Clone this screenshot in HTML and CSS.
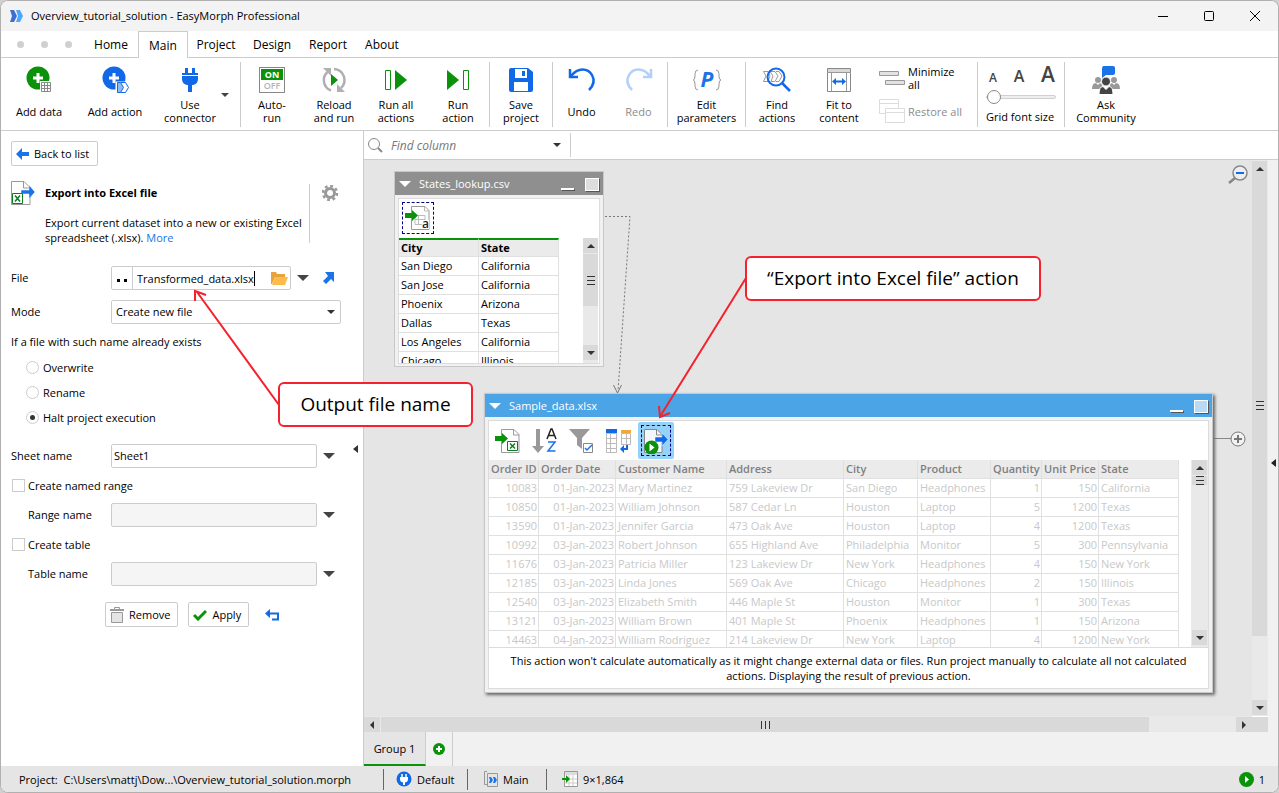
FILE: index.html
```html
<!DOCTYPE html>
<html lang="en">
<head>
<meta charset="utf-8">
<title>Overview_tutorial_solution - EasyMorph Professional</title>
<link rel="stylesheet" href="styles.css">
</head>
<body>
<div class="window">
  <header class="titlebar">
    <svg class="logo" width="14" height="12" viewBox="0 0 14 12"><path d="M0 0h4l3 6-3 6H0l2-6z" fill="#3f6fd0"/><path d="M6 0h4l3 6-3 6H6l2-6z" fill="#4aa8ff"/></svg>
    <h1 class="title">Overview_tutorial_solution - EasyMorph Professional</h1>
    <div class="winctl">
      <button aria-label="Minimize"><svg width="12" height="12"><path d="M1 6.500h10" stroke="#000"/></svg></button>
      <button aria-label="Maximize"><svg width="12" height="12"><rect x="1.500" y="1.500" width="9" height="9" rx="1" fill="none" stroke="#000"/></svg></button>
      <button aria-label="Close"><svg width="12" height="12"><path d="M1 1l10 10M11 1L1 11" stroke="#000"/></svg></button>
    </div>
  </header>
  <nav class="tabs">
    <span class="dots"><i></i><i></i><i></i></span>
    <button class="tab t-home">Home</button><button class="tab t-main on">Main</button><button class="tab t-project">Project</button><button class="tab t-design">Design</button><button class="tab t-report">Report</button><button class="tab t-about">About</button>
    <span class="tabfill"></span>
  </nav>
  <div class="ribbon">
    <div class="group g-add">
      <button class="rb w76"><svg class="ic" width="28" height="28" viewBox="0 0 28 28"><circle cx="13" cy="12" r="11.500" fill="#0a930a"/><path d="M13 7v10M8 12h10" stroke="#fff" stroke-width="3"/><rect x="15" y="15" width="12" height="12" fill="#fff"/><path d="M16.500 16.500h9v9h-9zM19.500 16v10M22.500 16v10M16 19.500h10M16 22.500h10" fill="none" stroke="#888"/></svg><span class="lb">Add data</span></button>
      <button class="rb w76"><svg class="ic" width="28" height="28" viewBox="0 0 28 28"><circle cx="13" cy="12" r="11.500" fill="#1269e8"/><path d="M13 7v10M8 12h10" stroke="#fff" stroke-width="3"/><path d="M15.500 16.500h8l4 5-4 5.500h-8z" fill="#fff" stroke="#fff" stroke-width="2"/><path d="M16.500 16.500h3l3 5-3 5h-3z" fill="#8cbcf0" stroke="#1269e8"/><path d="M19.500 16.500h5l3 5-3 5h-5" fill="none" stroke="#1269e8"/></svg><span class="lb">Add action</span></button>
      <button class="rb w74"><svg class="ic" width="26" height="28" viewBox="0 0 26 28"><path d="M8 2h3v6H8zM15 2h3v6h-3zM5 7h16v2H5zM5 10h16v3q0 5-5 6h-1v7h-4v-7h-1q-5-1-5-6z" fill="#1269e8"/></svg><span class="lb">Use<br>connector</span></button>
      <button class="dd" aria-label="Connector list"></button>
    </div>
    <div class="group">
      <button class="rb w62"><svg class="ic" width="26" height="28" viewBox="0 0 26 28"><rect x=".5" y="1.500" width="25" height="25" fill="#fff" stroke="#888"/><path d="M2 3h22v11H2z" fill="#0a930a"/><g font-family="Open Sans" font-weight="700" text-anchor="middle"><text x="13" y="12" font-size="9" fill="#fff">ON</text><text x="13" y="23" font-size="9" fill="#b4b4b4" font-weight="600">OFF</text></g></svg><span class="lb">Auto-<br>run</span></button>
      <button class="rb w62"><svg class="ic" width="26" height="28" viewBox="0 0 26 28"><path d="M10 24.500A11 11 0 0 1 6.500 6M13 3A11 11 0 0 1 20 22" fill="none" stroke="#b0b0b0" stroke-width="2.500"/><path d="M2 2h8v8zM24 26h-8v-8z" fill="#b0b0b0"/><path d="M10 8v12l7-6z" fill="#0a930a"/></svg><span class="lb">Reload<br>and run</span></button>
      <button class="rb w62"><svg class="ic" width="26" height="28" viewBox="0 0 26 28"><path d="M2.500 4.500h5v19h-5z" fill="none" stroke="#0a930a"/><path d="M12 4v20l12-10z" fill="#0a930a"/></svg><span class="lb">Run all<br>actions</span></button>
      <button class="rb w62"><svg class="ic" width="26" height="28" viewBox="0 0 26 28"><path d="M18.500 4.500h5v19h-5z" fill="none" stroke="#0a930a"/><path d="M2 4v20l12-10z" fill="#0a930a"/></svg><span class="lb">Run<br>action</span></button>
    </div>
    <div class="group">
      <button class="rb w62"><svg class="ic" width="26" height="28" viewBox="0 0 26 28"><path d="M3 2h17l5 4v18q0 2-2 2H3q-2 0-2-2V4q0-2 2-2z" fill="#1269e8"/><path d="M7 3h12v9H7zM6 16h14v9H6z" fill="#fff"/><path d="M14 5h3v5h-3z" fill="#1269e8"/></svg><span class="lb">Save<br>project</span></button>
    </div>
    <div class="group">
      <button class="rb w57"><svg class="ic" width="28" height="28" viewBox="0 0 28 28"><path d="M3 10C10 1 20 2 24 9c4 7 0 12-3 15M2 3v8h8" fill="none" stroke="#1269e8" stroke-width="2.500"/></svg><span class="lb">Undo</span></button>
      <button class="rb w57 off" disabled><svg class="ic" width="28" height="28" viewBox="0 0 28 28"><path d="M25 10C18 1 8 2 4 9c-4 7 0 12 3 15M26 3v8h-8" fill="none" stroke="#b4d0f8" stroke-width="2.500"/></svg><span class="lb">Redo</span></button>
    </div>
    <div class="group">
      <button class="rb w77"><svg class="ic" width="30" height="28" viewBox="0 0 30 28"><path d="M6 4Q3 4 3 8v2q0 4-2 4 2 0 2 4v2q0 4 3 4M24 4q3 0 3 4v2q0 4 2 4-2 0-2 4v2q0 4-3 4" fill="none" stroke="#999"/><text x="15" y="21" text-anchor="middle" font-family="Open Sans" font-size="21" font-weight="700" font-style="italic" fill="#1a73e8">P</text></svg><span class="lb">Edit<br>parameters</span></button>
    </div>
    <div class="group g-find">
      <button class="rb w62"><svg class="ic" width="28" height="28" viewBox="0 0 28 28"><path d="M.5 5.500H5l2 4.500-2 5.500H.5L3 10zM7 5.500h5l3 4.500-3 5.500H8L10 10zM13 5.500h3l3 4.500-3 5.500h-3" fill="none" stroke="#999"/><circle cx="13" cy="11" r="8.500" fill="none" stroke="#1269e8" stroke-width="2"/><path d="M19 17l8 8" stroke="#1269e8" stroke-width="2.500"/></svg><span class="lb">Find<br>actions</span></button>
      <button class="rb w62"><svg class="ic" width="26" height="28" viewBox="0 0 26 28"><path d="M1.500 2.500h23v23h-23z" fill="#fff" stroke="#888"/><path d="M2 3h22v3H2z" fill="#d8d8d8"/><path d="M1 6.500h24M5.500 7v18M20.500 7v18" stroke="#999"/><path d="M8 15.500h10" stroke="#1269e8" stroke-width="2"/><path d="M10 12l-4 3.500 4 3.500zM16 12l4 3.500-4 3.500z" fill="#1269e8"/></svg><span class="lb">Fit to<br>content</span></button>
      <div class="stackbtns">
        <button class="hb"><svg width="26" height="16"><path d="M.5 1.500h19v4H.5zM6.500 10.500h19v4h-19z" fill="#e2e2e2" stroke="#999"/></svg><span>Minimize<br>all</span></button>
        <button class="hb off" disabled><svg width="26" height="26"><g fill="#fff" stroke="#dcdcdc"><path d="M.5 1.500h19v14H.5zM.5 5.500h19"/><path d="M6.500 10.500h19v14h-19zM6.500 14.500h19"/></g></svg><span>Restore all</span></button>
      </div>
    </div>
    <div class="group g-font">
      <div class="aaa"><b class="a1">A</b><b class="a2">A</b><b class="a3">A</b></div>
      <input type="range" id="gfs" class="slider" min="0" max="10" value="0">
      <label for="gfs" class="gfl">Grid font size</label>
    </div>
    <div class="group last">
      <button class="rb w82"><svg class="ic" width="28" height="28" viewBox="0 0 28 28"><path d="M11 0h10q2 0 2 2v5q0 2-2 2h-7l-4 3V2z" fill="#1a73e8"/><g fill="#999"><circle cx="6" cy="14" r="3"/><circle cx="22" cy="14" r="3"/><path d="M0 23q0-6 4-6l2 2 2-2q2 0 3 6zM28 23q0-6-4-6l-2 2-2-2q-2 0-3 6z"/></g><g fill="#444" stroke="#fff"><circle cx="14" cy="15.500" r="4.500"/><path d="M7 28.500q0-8 4-8l3 3 3-3q4 0 4 8z"/></g></svg><span class="lb">Ask<br>Community</span></button>
    </div>
  </div>

  <div class="main">
    <aside class="side">
      <div class="form">
        <button class="btn back"><svg width="13" height="12"><path d="M0 6l6-6v4h7v4H6v4z" fill="#1a73e8"/></svg>Back to list</button>
        <section class="about">
          <svg width="25" height="25" viewBox="0 0 25 25"><path d="M.5.500H13l6 6v17H.5z" fill="#fff" stroke="#999"/><path d="M12.500 1v6H18" fill="none" stroke="#999"/><path d="M10 9h8V4l6 7-6 7v-5h-8z" fill="#1a73e8" stroke="#fff" stroke-width=".5"/><path d="M1.500 12.500h10v10h-10z" fill="#fff" stroke="#0a7d1e"/><path d="M4 14.500l5 6M9 14.500l-5 6" stroke="#0a7d1e" stroke-width="1.500"/></svg>
          <div class="abouttext"><h2>Export into Excel file</h2><p>Export current dataset into a new or existing Excel spreadsheet (.xlsx). <a href="#">More</a></p></div>
          <button class="plain gear" aria-label="Settings"><svg width="16" height="16" viewBox="0 0 16 16"><circle cx="8" cy="8" r="4.500" fill="none" stroke="#999" stroke-width="3"/><circle cx="8" cy="8" r="7" fill="none" stroke="#999" stroke-width="2.500" stroke-dasharray="2.800 2.700" /></svg></button>
        </section>
        <div class="row r1"><label for="file">File</label>
          <div class="filebox"><svg class="dd2" width="21" height="22"><path d="M5 12h3v3H5zM12 12h3v3h-3z"/></svg><input id="file" value="Transformed_data.xlsx"><i class="caret"></i>
            <button class="plain" aria-label="Browse"><svg width="17" height="14" viewBox="0 0 17 14"><path d="M0 13V1h5l1 2h8v3H4L1 13z" fill="#e8a33a"/><path d="M4 6h13l-3 8H1z" fill="#fdbb4a"/></svg></button></div>
          <button class="plain tri" aria-label="File options"></button>
          <button class="plain open" aria-label="Open file"><svg width="12" height="12"><path d="M2 0h9v10L8 7l-5 5-3-3 5-5z" fill="#1a73e8"/></svg></button></div>
        <div class="row r2"><label for="mode">Mode</label><div class="selwrap"><select id="mode"><option>Create new file</option></select></div></div>
        <fieldset><legend>If a file with such name already exists</legend>
          <label class="opt"><input type="radio" name="ex">Overwrite</label>
          <label class="opt"><input type="radio" name="ex">Rename</label>
          <label class="opt"><input type="radio" name="ex" checked>Halt project execution</label></fieldset>
        <div class="row r3"><label for="sheet">Sheet name</label><input class="txt" id="sheet" value="Sheet1"><button class="plain tri" aria-label="Sheet options"></button></div>
        <label class="chk"><input type="checkbox">Create named range</label>
        <div class="row sub"><label for="rng">Range name</label><input class="txt" id="rng" disabled><button class="plain tri" aria-label="Range options"></button></div>
        <label class="chk"><input type="checkbox">Create table</label>
        <div class="row sub"><label for="tbl">Table name</label><input class="txt" id="tbl" disabled><button class="plain tri" aria-label="Table options"></button></div>
        <div class="acts">
          <button class="btn"><svg width="14" height="16" viewBox="0 0 14 16"><path d="M4.500 2V.500h5V2" fill="none" stroke="#999"/><path d="M0 2h14v2H0z" fill="#999"/><path d="M1.500 5.500h11v10h-11z" fill="#e4e4e4" stroke="#999"/></svg>Remove</button>
          <button class="btn apply"><svg width="14" height="12"><path d="M1 6l4 4 8-8" fill="none" stroke="#0a930a" stroke-width="3"/></svg>Apply</button>
          <button class="plain revert" aria-label="Revert"><svg width="15" height="12"><path d="M4 4.500h9v6H7" fill="none" stroke="#1269e8" stroke-width="2"/><path d="M0 4.500L5 0v9z" fill="#1269e8"/></svg></button>
        </div>
      </div>
      <button class="plain fold" aria-label="Collapse panel"><svg width="5" height="8"><path d="M5 0v8L0 4z" fill="#333"/></svg></button>
    </aside>

    <section class="work">
      <div class="find">
        <svg width="15" height="15"><circle cx="6" cy="6" r="5.500" fill="none" stroke="#888"/><path d="M10 10l4 4" stroke="#888" stroke-width="2"/></svg>
        <input placeholder="Find column" aria-label="Find column"><button class="plain mini" aria-label="Columns"></button>
      </div>
      <div class="workrow">
        <div class="desk">
          <div class="canvas">
            <article class="tile t1">
              <header><i class="wtri"></i><span>States_lookup.csv</span><i class="min"></i><i class="max"></i></header>
              <div class="inner">
                <div class="tools"><button class="tool dash" aria-label="Import text file"><svg width="26" height="26" viewBox="0 0 26 26"><path d="M6.500 1.500H20l4 4v19H6.500z" fill="#fff" stroke="#999"/><path d="M19.500 2v4H24M10 10.500h10v9H10zM13.500 10v10M10 14.500h10" fill="none" stroke="#bbb"/><path d="M0 8h7V5l6 5.500L7 16v-3H0z" fill="#0a930a"/><path d="M17 15h7v9h-7z" fill="#fff"/><text x="17" y="23" font-family="Open Sans" font-size="12" font-weight="600" fill="#222">a</text></svg></button></div>
                <div class="gridrow">
                  <table class="grid g1"><colgroup><col class="c80"><col class="c80"></colgroup><thead><tr><th>City</th><th>State</th></tr></thead>
                  <tbody><tr><td>San Diego</td><td>California</td></tr><tr><td>San Jose</td><td>California</td></tr><tr><td>Phoenix</td><td>Arizona</td></tr><tr><td>Dallas</td><td>Texas</td></tr><tr><td>Los Angeles</td><td>California</td></tr><tr><td>Chicago</td><td>Illinois</td></tr></tbody></table>
                  <div class="vs s1"><i class="ar up"></i><i class="th"></i><i class="ar dn"></i></div>
                </div>
              </div>
            </article>
            <article class="tile t2">
              <header><i class="wtri"></i><span>Sample_data.xlsx</span><i class="min"></i><i class="max"></i></header>
              <div class="inner">
                <div class="tools">
                  <button class="tool" aria-label="Import Excel"><svg width="26" height="26" viewBox="0 0 26 26"><path d="M6.500 1.500H19l5 5v18H6.500z" fill="#fff" stroke="#999"/><path d="M18.500 2v5H24" fill="none" stroke="#999"/><path d="M0 8h7V5l6 5.500L7 16v-3H0z" fill="#0a930a"/><path d="M12.500 13.500h10v9h-10z" fill="#fff" stroke="#0a7d1e"/><path d="M15 15.500l5 5M20 15.500l-5 5" stroke="#0a7d1e" stroke-width="1.500"/></svg></button>
                  <button class="tool" aria-label="Sort"><svg width="26" height="26" viewBox="0 0 26 26"><path d="M4 1h4v17h4l-6 7-6-7h4z" fill="#999"/><path d="M15 11l4-10h1l4 10M16.500 7.500h6" fill="none" stroke="#222" stroke-width="1.500"/><path d="M16 14h7l-7 9h7.500" fill="none" stroke="#1a73e8" stroke-width="1.500"/></svg></button>
                  <button class="tool" aria-label="Filter"><svg width="26" height="26" viewBox="0 0 26 26"><path d="M0 1h21l-8 9v11l-5-4v-7z" fill="#999"/><path d="M14.500 15.500h9v9h-9z" fill="#fff" stroke="#888"/><path d="M16 20l2 2 5-5" fill="none" stroke="#1a73e8" stroke-width="1.500"/></svg></button>
                  <button class="tool" aria-label="Match"><svg width="26" height="26" viewBox="0 0 26 26"><path d="M.5 5.500h10v19H.5zM4.500 5v20M.5 10.500h10M.5 15.500h10M.5 20.500h10M15.500 5.500h9v11h-9zM20.500 5v11M15 10.500h10" fill="none" stroke="#bbb"/><path d="M0 1h11v4H0z" fill="#1269e8"/><path d="M15 2h10v3H15z" fill="#f0a83c"/><path d="M14 21l4-4v3h2v-3h2v5h-4v3z" fill="#1269e8"/></svg></button>
                  <button class="tool sel" aria-label="Export into Excel file"><svg width="26" height="26" viewBox="0 0 26 26"><path d="M1.500 1.500H14l5 5v18H1.500z" fill="#f4f8fc" stroke="#888"/><path d="M13.500 2v5H19" fill="none" stroke="#888"/><path d="M12 9h7V5l6 6.500L19 18v-4h-7z" fill="#1269e8" stroke="#fff" stroke-width=".5"/><circle cx="8.500" cy="19.500" r="7" fill="#0a930a"/><path d="M6.500 15.500v8l5-4z" fill="#fff"/></svg></button>
                </div>
                <div class="gridrow">
                  <table class="grid g2"><colgroup><col class="c50"><col class="c77"><col class="c111"><col class="c117"><col class="c74"><col class="c73"><col class="c51"><col class="c57"><col class="c80"></colgroup>
                  <thead><tr><th>Order ID</th><th>Order Date</th><th>Customer Name</th><th>Address</th><th>City</th><th>Product</th><th>Quantity</th><th>Unit Price</th><th>State</th></tr></thead>
                  <tbody>
                  <tr><td>10083</td><td>01-Jan-2023</td><td>Mary Martinez</td><td>759 Lakeview Dr</td><td>San Diego</td><td>Headphones</td><td>1</td><td>150</td><td>California</td></tr>
                  <tr><td>10850</td><td>01-Jan-2023</td><td>William Johnson</td><td>587 Cedar Ln</td><td>Houston</td><td>Laptop</td><td>5</td><td>1200</td><td>Texas</td></tr>
                  <tr><td>13590</td><td>01-Jan-2023</td><td>Jennifer Garcia</td><td>473 Oak Ave</td><td>Houston</td><td>Laptop</td><td>4</td><td>1200</td><td>Texas</td></tr>
                  <tr><td>10992</td><td>03-Jan-2023</td><td>Robert Johnson</td><td>655 Highland Ave</td><td>Philadelphia</td><td>Monitor</td><td>5</td><td>300</td><td>Pennsylvania</td></tr>
                  <tr><td>11676</td><td>03-Jan-2023</td><td>Patricia Miller</td><td>123 Lakeview Dr</td><td>New York</td><td>Headphones</td><td>4</td><td>150</td><td>New York</td></tr>
                  <tr><td>12185</td><td>03-Jan-2023</td><td>Linda Jones</td><td>569 Oak Ave</td><td>Chicago</td><td>Headphones</td><td>2</td><td>150</td><td>Illinois</td></tr>
                  <tr><td>12540</td><td>03-Jan-2023</td><td>Elizabeth Smith</td><td>446 Maple St</td><td>Houston</td><td>Monitor</td><td>1</td><td>300</td><td>Texas</td></tr>
                  <tr><td>13121</td><td>03-Jan-2023</td><td>William Brown</td><td>401 Maple St</td><td>Phoenix</td><td>Headphones</td><td>1</td><td>150</td><td>Arizona</td></tr>
                  <tr><td>14463</td><td>04-Jan-2023</td><td>William Rodriguez</td><td>214 Lakeview Dr</td><td>New York</td><td>Laptop</td><td>4</td><td>1200</td><td>New York</td></tr>
                  </tbody></table>
                  <div class="vs s2"><i class="ar up"></i><i class="th"></i><i class="ar dn"></i></div>
                </div>
                <p class="note">This action won't calculate automatically as it might change external data or files. Run project manually to calculate all not calculated actions. Displaying the result of previous action.</p>
              </div>
            </article>
            <svg class="links" width="889" height="557"><path d="M241 56.500h25L254 231" fill="none" stroke="#777" stroke-dasharray="2 2"/><path d="M249.500 225l4 8 4-8" fill="none" stroke="#777"/><path d="M850 278.500h17" stroke="#888"/><circle cx="874" cy="279" r="7" fill="#f2f2f2" stroke="#777"/><path d="M870 279h8M874 275v8" stroke="#777" stroke-width="2"/>
            <circle cx="876" cy="13" r="7" fill="#eee" stroke="#888" stroke-width="1.500"/><path d="M872 13h8" stroke="#1269e8" stroke-width="2"/><path d="M871 18l-6 5" stroke="#888" stroke-width="2.500"/></svg>
          </div>
          <div class="vs big"><i class="ar up"></i><i class="th"></i><i class="ar dn"></i></div>
          <div class="hs"><i class="ar lf"></i><i class="th"></i><i class="ar rt"></i></div>
          <i class="corner"></i>
          <div class="groups"><button class="gt">Group 1</button><button class="ga" aria-label="Add group"><svg width="12" height="12"><circle cx="6" cy="6" r="6" fill="#0a930a"/><path d="M6 3v6M3 6h6" stroke="#fff" stroke-width="2"/></svg></button></div>
        </div>
        <button class="plain strip" aria-label="Expand panel"><svg width="5" height="8"><path d="M5 0v8L0 4z" fill="#222"/></svg></button>
      </div>
    </section>
  </div>

  <footer class="status">
    <span class="s-proj">Project:&nbsp; C:\Users\mattj\Dow...\Overview_tutorial_solution.morph</span>
    <span class="s-def"><svg width="16" height="16"><circle cx="8" cy="8" r="7.500" fill="#1269e8"/><path d="M6 3v3M10 3v3" stroke="#fff" stroke-width="1.500"/><path d="M4 6h8v2q0 3-3 3.500V14H7v-2.500Q4 11 4 8z" fill="#fff"/></svg>Default</span>
    <span class="s-main"><svg width="14" height="16"><path d="M3 .5H.5v13H3M3.500 2.500h10v13h-10z" fill="none" stroke="#999"/><path d="M5 6h2l2 3-2 3H5l1-3zM9 6h2l2 3-2 3H9l1-3z" fill="#1a73e8"/></svg>Main</span>
    <span class="s-size"><svg width="16" height="16"><path d="M2.500.5h13v15h-13z" fill="#fff" stroke="#999"/><path d="M3 1h12v3H3z" fill="#ddd"/><path d="M7 4v11M11 4v11M3 8h12M3 12h12" stroke="#ccc"/><path d="M0 7h4V4l4 4-4 4V9H0z" fill="#0a930a"/></svg>9×1,864</span>
    <span class="s-run"><svg width="15" height="15"><circle cx="7.500" cy="7.500" r="7.500" fill="#0a930a"/><path d="M6 4v7l4-3.500z" fill="#fff"/></svg>1</span>
  </footer>
  <svg class="marks" width="1279" height="793"><g fill="none" stroke="#f5222d" stroke-width="2"><path d="M279 405L197 292M195 301v-10l11 4"/><path d="M746 278l-85 137M659 406l1 11 10-4"/></g></svg>
  <div class="callout co1">Output file name</div>
  <div class="callout co2">“Export into Excel file” action</div>
</div>
</body>
</html>
```
FILE: styles.css
```css
* { box-sizing: border-box; }
html { background: #d0d0d0; }
body { margin: 0; font: 11px/15px "Open Sans", "Noto Sans", sans-serif; color: #000; }
button, input, select { font: inherit; color: inherit; margin: 0; padding: 0; border: 0; background: none; }
svg { display: block; flex: none; }
h1, h2, p, fieldset { margin: 0; padding: 0; border: 0; font-size: inherit; }
.window { position: relative; height: 100vh; display: flex; flex-direction: column; border: 1px solid #b0b0b0; border-radius: 8px; overflow: hidden; background: #fff; }

.titlebar { display: flex; align-items: center; height: 30px; background: #f3f3f3; flex: none; padding-bottom: 1px; }
.logo { margin: 0 7px 0 9px; }
.title { font-weight: 400; flex: 1; }
.winctl { display: flex; }
.winctl button { width: 46px; display: flex; justify-content: center; }

.tabs { display: flex; height: 27px; flex: none; }
.tabs > * { border-bottom: 1px solid #ccc; }
.dots { display: flex; align-items: center; gap: 17px; padding-left: 16px; width: 83px; }
.dots i { width: 7px; height: 7px; border-radius: 50%; background: #d0d0d0; }
.tab { font-size: 12px; width: 56px; }
.t-home { width: 54px; }
.t-main { width: 50px; }
.t-project { width: 56px; }
.t-about { width: 52px; }
.tab.on { border: 1px solid #ccc; border-bottom: 0; }
.tabfill { flex: 1; }

.ribbon { display: flex; height: 73px; border-bottom: 1px solid #ccc; padding: 4px 0 3px; flex: none; line-height: 13px; }
.group { display: flex; border-right: 1px solid #ccc; }
.group.last { border: 0; }
.g-add { width: 240px; }
.rb { display: flex; flex-direction: column; align-items: center; padding-top: 4px; flex: none; }
.ic { height: 28px; margin-bottom: 4px; overflow: visible; }
.lb { height: 26px; display: flex; align-items: center; text-align: center; white-space: nowrap; }
.w76 { width: 76px; } .w74 { width: 74px; } .w62 { width: 62px; } .w57 { width: 57px; } .w77 { width: 77px; } .w82 { width: 82px; }
.dd { width: 0; height: 0; margin-left: -6px; align-self: center; border: 4px solid transparent; border-top-color: #444; border-bottom: 0; }
.off { color: #8c8c8c; }
.g-find { width: 232px; }
.stackbtns { display: flex; flex-direction: column; gap: 6px; padding: 3px 0 0 9px; }
.hb { display: flex; align-items: center; gap: 3px; text-align: left; height: 26px; white-space: nowrap; }
.hb + .hb { height: 28px; }
.g-font { width: 87px; flex-direction: column; padding: 0 8px; }
.aaa { display: flex; align-items: baseline; justify-content: space-between; height: 24px; padding: 0 1px 0 3px; color: #444; line-height: 24px; }
.aaa b { font-weight: 600; }
.a1 { font-size: 12px; } .a2 { font-size: 16px; } .a3 { font-size: 21px; }
.slider { appearance: none; width: 70px; height: 14px; margin: 4px 0 6px; }
.slider::-webkit-slider-runnable-track { height: 4px; background: #eee; border: 1px solid #d0d0d0; border-radius: 2px; }
.slider::-webkit-slider-thumb { appearance: none; width: 14px; height: 14px; margin-top: -6px; border: 1px solid #888; border-radius: 50%; background: #fff; }
.gfl { white-space: nowrap; }

.main { display: flex; flex: 1; min-height: 0; }
.side { width: 363px; border-right: 1px solid #ccc; display: flex; flex: none; }
.form { flex: 1; padding: 10px 0 0 10px; }
.plain { display: flex; align-items: center; justify-content: center; flex: none; }
.btn { display: flex; align-items: center; gap: 5px; height: 25px; border: 1px solid #ccc; border-radius: 2px; background: #fff; padding: 0 8px 0 4px; white-space: nowrap; }
.about { display: flex; margin-top: 15px; align-items: flex-start; gap: 9px; }
.abouttext { width: 265px; border-right: 1px solid #ccc; margin: 3px 3px 0 0; height: 59px; }
.abouttext h2 { font-weight: 700; line-height: 18px; margin-bottom: 13px; }
a { color: #1a73e8; text-decoration: none; }
.gear { margin-top: 4px; }
.row { display: flex; align-items: center; height: 24px; }
.row > label { width: 100px; padding-bottom: 1px; }
.r1 { margin-top: 23px; }
.r2 { margin-top: 10px; }
.filebox { width: 180px; height: 24px; display: flex; border: 1px solid #ccc; border-radius: 2px; align-items: center; }
.dd2 { border-right: 1px solid #ccc; }
.filebox input { width: 121px; padding-left: 4px; outline: 0; }
.caret { width: 1px; height: 15px; background: #000; }
.filebox .plain { margin-left: auto; padding-right: 2px; }
.tri { width: 0; height: 0; margin-left: 6px; border: 6px solid transparent; border-top-color: #444; border-bottom: 0; }
.open { margin-left: 14px; }
.selwrap { width: 230px; position: relative; }
.selwrap::after { content: ""; position: absolute; right: 6px; top: 10px; border: 4px solid transparent; border-top-color: #333; border-bottom: 0; }
select { appearance: none; width: 100%; height: 24px; border: 1px solid #ccc; border-radius: 2px; padding: 0 4px 1px; }
fieldset { margin-top: 10px; }
legend { padding: 0; height: 20px; margin-bottom: 1px; }
.opt { display: flex; align-items: center; height: 25px; gap: 4px; padding: 0 0 1px 15px; }
.opt input { appearance: none; width: 13px; height: 13px; border: 1px solid #ccc; border-radius: 50%; display: grid; place-items: center; }
.opt input:checked::after { content: ""; width: 5px; height: 5px; border-radius: 50%; background: #333; }
.r3 { margin-top: 14px; }
.txt { width: 206px; height: 24px; border: 1px solid #ccc; border-radius: 2px; padding: 0 2px 1px; background: #fff; }
.txt:disabled { background: #f5f5f5; }
.chk { display: flex; align-items: center; gap: 3px; height: 35px; padding-left: 1px; }
.chk input { appearance: none; width: 13px; height: 13px; border: 1px solid #ccc; }
.sub > label { padding-left: 17px; }
.acts { display: flex; align-items: center; margin: 16px 0 0 94px; gap: 10px; }
.acts .btn { padding-right: 7px; }
.revert { margin-left: 6px; }
.fold { width: 16px; }

.work { flex: 1; display: flex; flex-direction: column; min-width: 0; }
.find { display: flex; align-items: center; height: 29px; flex: none; border-bottom: 1px solid #ccc; padding-left: 4px; }
.find input { width: 158px; margin-left: 8px; font-style: italic; font-size: 12px; outline: 0; }
.find input::placeholder { color: #777; opacity: 1; }
.mini { width: 22px; height: 24px; border-right: 1px solid #ccc; }
.mini::before { content: ""; border: 4px solid transparent; border-top-color: #333; border-bottom: 0; margin-right: 6px; }
.workrow { flex: 1; display: flex; min-height: 0; }
.desk { flex: 1; min-width: 0; display: grid; grid-template: minmax(0, 1fr) 16px 34px / minmax(0, 1fr) 16px; }
.canvas { position: relative; background: #e5e5e5; overflow: hidden; }
.strip { width: 10px; background: #f1f1f1; justify-content: flex-end; padding-right: 2px; }
.vs { display: flex; flex-direction: column; background: #e9e9e9; }
.hs { display: flex; background: #e9e9e9; padding-top: 1px; }
.ar { width: 15px; height: 15px; background: #d9d9d9; flex: none; display: grid; place-items: center; }
.ar::after { content: ""; border: 4px solid transparent; }
.up::after { border-bottom-color: #333; border-top: 0; }
.dn::after { border-top-color: #333; border-bottom: 0; }
.lf::after { border-right-color: #333; border-left: 0; }
.rt::after { border-left-color: #333; border-right: 0; }
.vs .ar.dn { margin-top: auto; }
.th { background: #d9d9d9; margin-top: 1px; display: grid; place-items: center; width: 15px; }
.th::after { content: ""; width: 8px; height: 7px; border: solid #333; border-width: 1px 0; background: linear-gradient(#333, #333) center / 8px 1px no-repeat; }
.big { padding: 1px 0; }
.big .th { flex: 0 0 83%; margin-top: 0; }
.hs .th { flex: 1; height: 15px; margin: 0 87px 0 1px; }
.hs .th::after { width: 7px; height: 8px; border-width: 0 1px; background: linear-gradient(#333, #333) center / 1px 8px no-repeat; }
.hs .ar { width: 16px; }
.corner { background: #d9d9d9; margin-top: 1px; }
.groups { grid-column: 1 / 3; display: flex; background: #f1f1f1; }
.gt { width: 62px; background: #e5e5e5; border-bottom: 2px solid #0a930a; border-right: 1px solid #ccc; }
.ga { width: 27px; border-right: 1px solid #ccc; display: flex; align-items: center; justify-content: center; }

.tile { position: absolute; background: #f1f1f1; border: 1px solid #c8c8c8; }
.t1 { left: 30px; top: 11px; width: 210px; height: 196px; }
.t2 { left: 120px; top: 233px; width: 729px; height: 300px; box-shadow: 2px 2px 3px #666; z-index: 1; }
.tile header { height: 23px; display: flex; align-items: center; color: #fff; background: #8f8f8f; padding: 0 4px; }
.t2 header { background: #4aa4e6; }
.tile header span { margin-left: 8px; flex: 1; }
.wtri { border: 6px solid transparent; border-top-color: #fff; border-bottom: 0; }
.min { width: 13px; height: 2px; background: #fff; margin: 11px 11px 0 0; box-shadow: 1px 1px 0 #555; }
.max { width: 14px; height: 13px; border: 1px solid #fff; background: #ddd; box-shadow: 1px 1px 0 #555; margin-top: 2px; }
.t2 .max { background: #b8daf6; }
.inner { margin: 3px 3px 0; border: 1px solid #dcdcdc; background: #fff; height: 166px; overflow: hidden; display: flex; flex-direction: column; }
.t2 .inner { height: 269px; }
.tools { display: flex; height: 39px; padding: 3px 3px 4px; flex: none; }
.tool { width: 32px; height: 32px; display: grid; place-items: center; }
.dash { border: 1px dashed #00008b; }
.t2 .tools { padding: 1px 0 0 1px; gap: 1px; }
.t2 .tool { width: 36px; height: 37px; }
.t2 .sel { background: #94d2fa; border-radius: 2px; outline: 1px dashed #00008b; outline-offset: -4px; }
.gridrow { flex: 1; display: flex; overflow: hidden; }
.grid { border-collapse: separate; border-spacing: 0; table-layout: fixed; align-self: flex-start; white-space: nowrap; line-height: 14px; }
.g1 { width: 160px; }
.g2 { width: 690px; color: #c8c8c8; }
.c80 { width: 80px; } .c50 { width: 50px; } .c51 { width: 51px; } .c77 { width: 77px; } .c111 { width: 111px; } .c117 { width: 117px; } .c74 { width: 74px; } .c73 { width: 73px; } .c57 { width: 57px; }
.grid td, .grid th { height: 19px; padding: 0 1px 0 2px; border: solid #e0e0e0; border-width: 0 1px 1px 0; text-align: left; overflow: hidden; }
.grid th { background: #ebebeb; font-weight: 700; }
.g1 th { border-top: 2px solid #0a930a; }
.g2 th { color: #808080; font-weight: 600; }
.g2 td:nth-child(1), .g2 td:nth-child(2), .g2 td:nth-child(7), .g2 td:nth-child(8) { text-align: right; }
.s1 { margin: 0 1px 0 auto; padding-bottom: 3px; }
.s1 .th { height: 52px; }
.s2 { margin: 0 0 0 auto; padding: 0 1px 2px; }
.s2 .th { height: 9px; }
.note { height: 41px; border-top: 1px solid #dcdcdc; text-align: center; padding: 5px 4px 0; flex: none; }
.links { position: absolute; left: 0; top: 0; pointer-events: none; }

.status { display: flex; align-items: center; height: 26px; background: #e5e5e5; flex: none; padding: 0 13px 0 18px; }
.status span { display: flex; align-items: center; gap: 5px; height: 21px; white-space: nowrap; }
.status .s-proj { width: 365px; border-right: 1px solid #666; }
.s-def { width: 84px; padding-left: 12px; border-right: 1px solid #666; }
.s-main { width: 79px; padding-left: 16px; border-right: 1px solid #666; }
.s-size { padding-left: 15px; }
.s-run { margin-left: auto; }

.marks { position: absolute; left: -1px; top: -1px; pointer-events: none; z-index: 2; }
.callout { position: absolute; z-index: 3; display: flex; align-items: center; justify-content: center; height: 45px; background: #fff; border: 2px solid #f5222d; border-radius: 6px; font-size: 19px; white-space: nowrap; }
.co1 { left: 277px; top: 381px; width: 195px; }
.co2 { left: 744px; top: 255px; width: 296px; }
```
